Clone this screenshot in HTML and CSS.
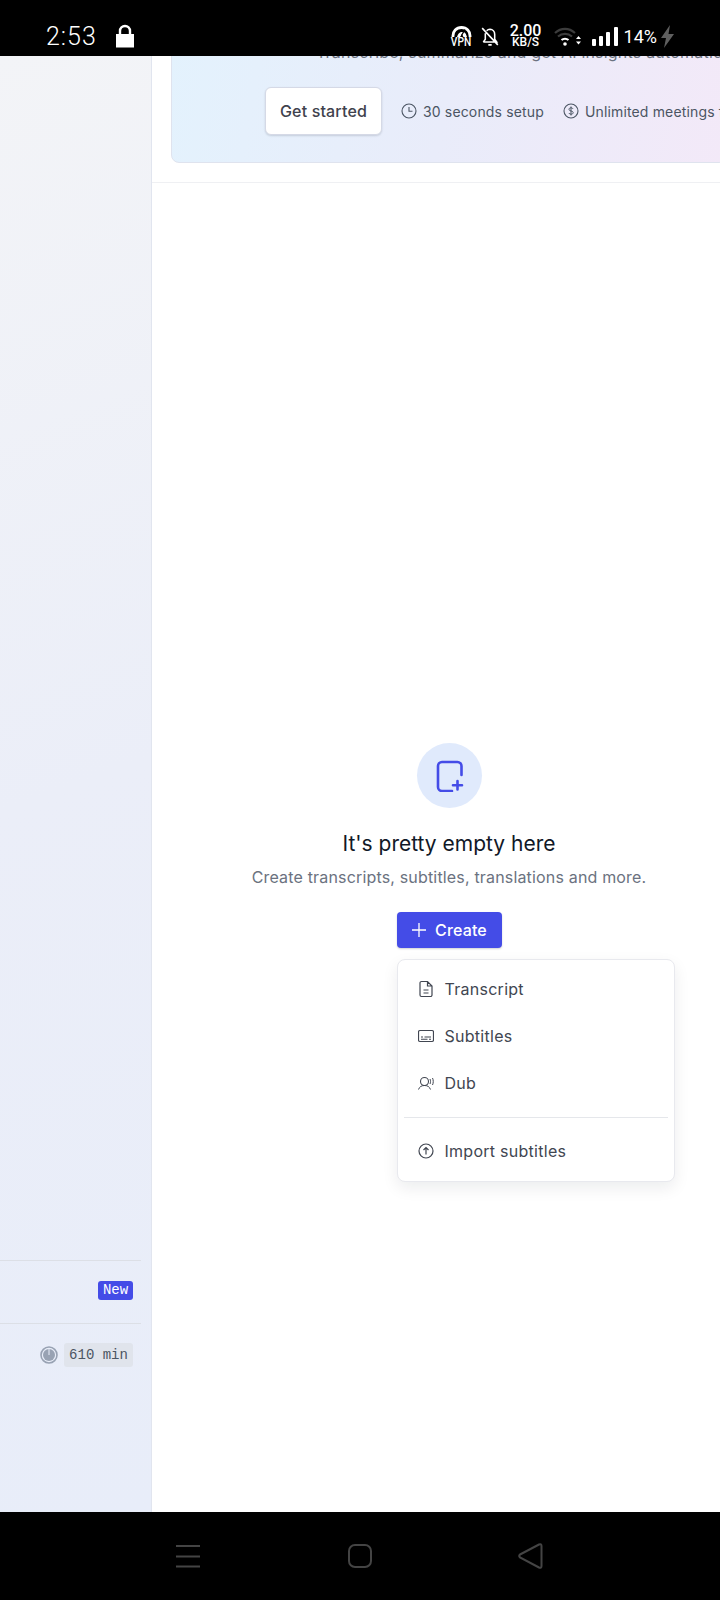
FILE: index.html
```html
<!DOCTYPE html>
<html>
<head>
	<meta charset="utf-8">
	<title>Create</title>
	<link rel="stylesheet" href="styles.css">
</head>
<body>
	<div class="statusbar">
		<span class="clock">2:53</span>
		<svg class="lock" width="20" height="24" viewBox="0 0 20 24"><path d="M5 11V7a5 5 0 0 1 10 0v4" fill="none" stroke="#fff" stroke-width="2.4"/><rect x="1" y="10" width="18" height="13.5" fill="#fff"/></svg>
		<span class="spacer"></span>
		<div class="vpn">
			<svg width="21" height="11" viewBox="0 0 21 11"><path d="M2 11C1.500 5 5.500 1.500 10.500 1.500S19.500 5 19 11" fill="none" stroke="#fff" stroke-width="2.800"/><path d="M6 11q1-4 4-5l3 0q2 1 3 5h-3.500L11 8 9 11z" fill="#fff"/><path d="M14 3.500l-3.500 6" stroke="#000" stroke-width="1.300"/></svg>
			<span class="vpn-label">VPN</span>
		</div>
		<svg class="bell" width="18" height="19" viewBox="1 1 16 17"><path d="M3 14.500h12l-1.800-2.500V7.500A4.500 4.500 0 0 0 9 3a4.500 4.500 0 0 0-3 1.300M4.800 6.500V12L3 14.500M7.500 17h3M2 2l14 15" fill="none" stroke="#fff" stroke-width="1.400"/></svg>
		<div class="speed">
			<span class="speed-num">2.00</span>
			<span class="speed-unit">KB/S</span>
		</div>
		<svg class="wifi" width="27" height="20" viewBox="0 0 27 20"><path d="M1 7c6-5.500 14-5.500 20 0M4 10.500c4-3.500 10-3.500 14 0" fill="none" stroke="#3c3c3c" stroke-width="2.200"/><path d="M7.500 14c2-1.700 5-1.700 7 0" fill="none" stroke="#fff" stroke-width="2.200"/><circle cx="11" cy="18" r="1.800" fill="#fff"/><path d="M22 13l2.500-3 2.500 3zM22 15.500l2.500 3 2.500-3z" fill="#fff"/></svg>
		<svg class="signal" width="26" height="19" viewBox="0 0 26 19"><rect x="0" y="12" width="4" height="7" rx="1" fill="#fff"/><rect x="7" y="9" width="4" height="10" rx="1" fill="#fff"/><rect x="14" y="5" width="4" height="14" rx="1" fill="#fff"/><rect x="22" y="0" width="4" height="19" rx="1" fill="#fff"/></svg>
		<span class="battery">14%</span>
		<svg class="bolt" width="13" height="23" viewBox="0 0 13 23"><path d="M9 0L0 13h5L3 23l10-14H7.500z" fill="#5f5f5f"/></svg>
	</div>

	<div class="app">
		<div class="sidebar">
			<div class="side-row side-new">
				<span class="badge-new">New</span>
			</div>
			<div class="side-row side-usage">
				<svg width="18" height="18" viewBox="0 0 18 18"><circle cx="9" cy="9" r="8" fill="none" stroke="#98a2b3" stroke-width="1.600"/><circle cx="9" cy="9" r="6" fill="#98a2b3"/><path d="M9 2.500V9" stroke="#e8edf9" stroke-width="1"/></svg>
				<span class="badge-min">610 min</span>
			</div>
		</div>

		<div class="content">
			<div class="promo-wrap">
				<div class="promo">
					<p class="promo-text">Transcribe, summarize and get AI insights automatically</p>
					<div class="promo-row">
						<button class="btn-start">Get started</button>
						<span class="promo-note">
							<svg width="16" height="16" viewBox="0 0 16 16"><circle cx="8" cy="8" r="7" fill="none" stroke="#4b5563" stroke-width="1.100"/><path d="M8 4v4.300h3.500" fill="none" stroke="#4b5563" stroke-width="1.100"/></svg>
							30 seconds setup
						</span>
						<span class="promo-note">
							<svg width="16" height="16" viewBox="0 0 16 16"><circle cx="8" cy="8" r="7" fill="none" stroke="#4b5563" stroke-width="1.100"/><path d="M10 5.800C9.600 5 9 4.800 8 4.800c-1.200 0-2 .6-2 1.600 0 2.200 4.200 1 4.200 3.200 0 1-.9 1.600-2.200 1.600-1 0-1.800-.4-2.200-1.200M8 3.500v9" fill="none" stroke="#4b5563" stroke-width="1"/></svg>
							Unlimited meetings free
						</span>
					</div>
				</div>
			</div>

			<div class="empty">
				<div class="empty-icon">
					<svg width="32" height="32" viewBox="0 0 32 32"><path d="M28.500 15V6a4 4 0 0 0-4-4H9a4 4 0 0 0-4 4v21a4 4 0 0 0 4 4h10M24.500 21v8.500M20 25.300h9" fill="none" stroke="#444ce7" stroke-width="2.600" stroke-linecap="round"/></svg>
				</div>
				<h2>It's pretty empty here</h2>
				<p>Create transcripts, subtitles, translations and more.</p>
				<div class="create-wrap">
					<button class="btn-create">
						<svg width="16" height="16" viewBox="0 0 16 16"><path d="M8 1v14M1 8h14" stroke="#fff" stroke-width="1.300"/></svg>
						Create
					</button>
					<div class="menu">
						<div class="menu-item">
							<svg width="16" height="18" viewBox="0 0 16 18"><path d="M9.500 1.500H3.500a1.500 1.500 0 0 0-1.500 1.500v12a1.500 1.500 0 0 0 1.500 1.500h9a1.500 1.500 0 0 0 1.500-1.500V6zM9.500 1.500V6H14M5.500 10h5M5.500 13h5" fill="none" stroke="#414651" stroke-width="1.200"/></svg>
							Transcript
						</div>
						<div class="menu-item">
							<svg width="16" height="18" viewBox="0 0 16 18"><rect x=".5" y="3.500" width="15" height="11" rx="1.500" fill="none" stroke="#414651" stroke-width="1.200"/><path d="M3 10h2M6.500 10h6.500M3 12.300h6.500M11 12.300h2" stroke="#414651" stroke-width="1.100"/></svg>
							Subtitles
						</div>
						<div class="menu-item">
							<svg width="16" height="18" viewBox="0 0 16 18"><circle cx="6.500" cy="7.500" r="4" fill="none" stroke="#414651" stroke-width="1.100"/><path d="M.5 15.500c1-2.800 3-4 6-4s5 1.200 6 4M12 5c.7 1.500.7 3.500 0 5M14.500 4c1 2 1 5 0 7" fill="none" stroke="#414651" stroke-width="1"/></svg>
							Dub
						</div>
						<div class="menu-sep"></div>
						<div class="menu-item">
							<svg width="16" height="18" viewBox="0 0 16 18"><circle cx="8" cy="9" r="7" fill="none" stroke="#414651" stroke-width="1.200"/><path d="M8 12.500v-7M5.500 8L8 5.500 10.500 8" fill="none" stroke="#414651" stroke-width="1.200"/></svg>
							Import subtitles
						</div>
					</div>
				</div>
			</div>
		</div>
	</div>

	<div class="navbar">
		<svg width="24" height="24" viewBox="0 0 24 24"><path d="M0 2h24M0 12.500h24M0 22.500h24" stroke="#444" stroke-width="2"/></svg>
		<svg width="24" height="24" viewBox="0 0 24 24"><rect x="1" y="1" width="22" height="22" rx="6" fill="none" stroke="#444" stroke-width="2"/></svg>
		<svg class="nav-back" width="25" height="26" viewBox="0 0 25 26"><path d="M2 11.500L21 1.500q2.500-1 2.500 1.500v20q0 2.500-2.500 1.500L2 14.500q-1.500-1.500 0-3z" fill="none" stroke="#444" stroke-width="2"/></svg>
	</div>
</body>
</html>
```

FILE: styles.css
```css
html, body
{
	margin: 0;
	padding: 0;
}

body
{
	width: 720px;
	height: 1600px;
	overflow: hidden;
	display: flex;
	flex-direction: column;
	font-family: Inter, "Liberation Sans", sans-serif;
	background: #000;
}

/* phone status bar */
.statusbar
{
	height: 40px;
	padding-top: 16px;
	display: flex;
	align-items: center;
	background: #000;
	color: #fff;
	font-family: Roboto, sans-serif;
	flex-shrink: 0;
}

.clock
{
	margin-left: 46px;
	font-size: 25px;
	font-weight: 300;
	letter-spacing: 1px;
}

.lock
{
	margin-left: 18px;
}

.spacer
{
	flex: 1;
}

.vpn
{
	width: 21px;
	display: flex;
	flex-direction: column;
	align-items: center;
}

.vpn-label
{
	font-size: 12px;
	font-weight: 500;
	line-height: 10px;
	transform: scaleX(0.85);
}

.bell
{
	margin-left: 9px;
}

.speed
{
	margin-left: 11px;
	width: 32px;
	display: flex;
	flex-direction: column;
	align-items: center;
}

.speed-num
{
	font-size: 16px;
	font-weight: 500;
	line-height: 12px;
}

.speed-unit
{
	font-size: 12px;
	font-weight: 500;
	line-height: 10px;
}

.wifi
{
	margin-left: 12px;
}

.signal
{
	margin-left: 11px;
}

.battery
{
	margin-left: 6px;
	font-size: 18px;
}

.bolt
{
	margin-left: 4px;
	margin-right: 46px;
}

/* page */
.app
{
	height: 1456px;
	display: flex;
	overflow: hidden;
	background: #fff;
}

.sidebar
{
	width: 152px;
	flex-shrink: 0;
	display: flex;
	flex-direction: column;
	justify-content: flex-end;
	padding-bottom: 139px;
	box-sizing: border-box;
	border-right: solid 1px #e1e5ef;
	background: linear-gradient(160deg, #f3f4f7 0%, #ebeef8 50%, #e8edf9 100%);
}

.side-row
{
	margin-right: 10px;
	display: flex;
	align-items: flex-start;
	justify-content: flex-end;
	gap: 6px;
	padding-right: 8px;
	box-sizing: border-box;
	border-top: solid 1px #dcdfe6;
}

.side-new
{
	height: 63px;
	padding-top: 20px;
}

.side-usage
{
	height: 50px;
	padding-top: 19px;
}

.badge-new
{
	height: 19px;
	width: 35px;
	line-height: 19px;
	text-align: center;
	border-radius: 3px;
	background: #444ce7;
	color: #fff;
	font-family: "Liberation Mono", monospace;
	font-size: 14px;
}

.badge-min
{
	height: 24px;
	width: 69px;
	line-height: 24px;
	text-align: center;
	border-radius: 3px;
	background: #e0e4ec;
	color: #4b5563;
	font-family: "Liberation Mono", monospace;
	font-size: 14px;
}

.side-usage svg
{
	margin-top: 3px;
}

.content
{
	width: 594px;
	flex-shrink: 0;
}

.promo-wrap
{
	height: 126px;
	padding: 0 19px;
	border-bottom: solid 1px #eff0f3;
	overflow: hidden;
}

.promo
{
	margin-top: -60px;
	height: 167px;
	box-sizing: border-box;
	border: solid 1px #dfe3ee;
	border-radius: 8px;
	background: linear-gradient(100deg, #e3f2fd 0%, #e9ecfa 50%, #f3e9f8 100%);
}

.promo-text
{
	margin: 0;
	padding-top: 43px;
	height: 24px;
	line-height: 24px;
	white-space: nowrap;
	font-size: 16px;
	letter-spacing: 0.2px;
	color: #6b7280;
	text-indent: 144px;
}

.promo-row
{
	margin-top: 23px;
	padding-left: 93px;
	display: flex;
	align-items: center;
	gap: 19px;
	white-space: nowrap;
}

.btn-start
{
	height: 48px;
	width: 117px;
	flex-shrink: 0;
	border: solid 1px #d5d9e6;
	border-radius: 6px;
	background: #fff;
	box-shadow: 0 1px 2px rgba(16, 24, 40, 0.15);
	font-family: Inter, sans-serif;
	font-size: 16px;
	font-weight: 450;
	letter-spacing: 0.15px;
	color: #3f424d;
}

.promo-note
{
	display: flex;
	align-items: center;
	flex-shrink: 0;
	gap: 6px;
	font-size: 14px;
	letter-spacing: 0.15px;
	color: #4b5563;
}

/* empty state */
.empty
{
	padding-top: 560px;
	display: flex;
	flex-direction: column;
	align-items: center;
}

.empty-icon
{
	width: 65px;
	height: 65px;
	border-radius: 50%;
	background: #e0eafc;
	display: flex;
	align-items: center;
	justify-content: center;
}

.empty h2
{
	margin: 22px 0 0 0;
	font-size: 21px;
	line-height: 28px;
	font-weight: 400;
	color: #111827;
}

.empty p
{
	margin: 7px 0 0 0;
	font-size: 16px;
	line-height: 24px;
	letter-spacing: 0.17px;
	color: #6b7280;
}

.create-wrap
{
	position: relative;
	margin-top: 23px;
}

.btn-create
{
	width: 105px;
	height: 36px;
	border: 0;
	border-radius: 4px;
	background: #444ce7;
	box-shadow: 0 1px 2px rgba(16, 24, 40, 0.2);
	display: flex;
	align-items: center;
	justify-content: center;
	gap: 8px;
	font-family: Inter, sans-serif;
	font-size: 16px;
	font-weight: 450;
	letter-spacing: 0.15px;
	color: #fff;
}

.menu
{
	position: absolute;
	left: 0;
	top: 47px;
	width: 278px;
	padding: 5px 6px 7px 6px;
	box-sizing: border-box;
	background: #fff;
	border: solid 1px #e8e9ee;
	border-radius: 8px;
	box-shadow: 0 6px 16px rgba(16, 24, 40, 0.08);
}

.menu-item
{
	height: 47px;
	padding-left: 14px;
	display: flex;
	align-items: center;
	gap: 11px;
	font-size: 16px;
	letter-spacing: 0.27px;
	color: #414651;
}

.menu-sep
{
	height: 1px;
	margin: 11px 0 9px 0;
	background: #e5e7eb;
}

/* phone nav bar */
.navbar
{
	height: 88px;
	padding-right: 2px;
	display: flex;
	align-items: center;
	justify-content: center;
	gap: 148px;
	background: #000;
	flex-shrink: 0;
}

.nav-back
{
	margin-left: -2px;
}
```
